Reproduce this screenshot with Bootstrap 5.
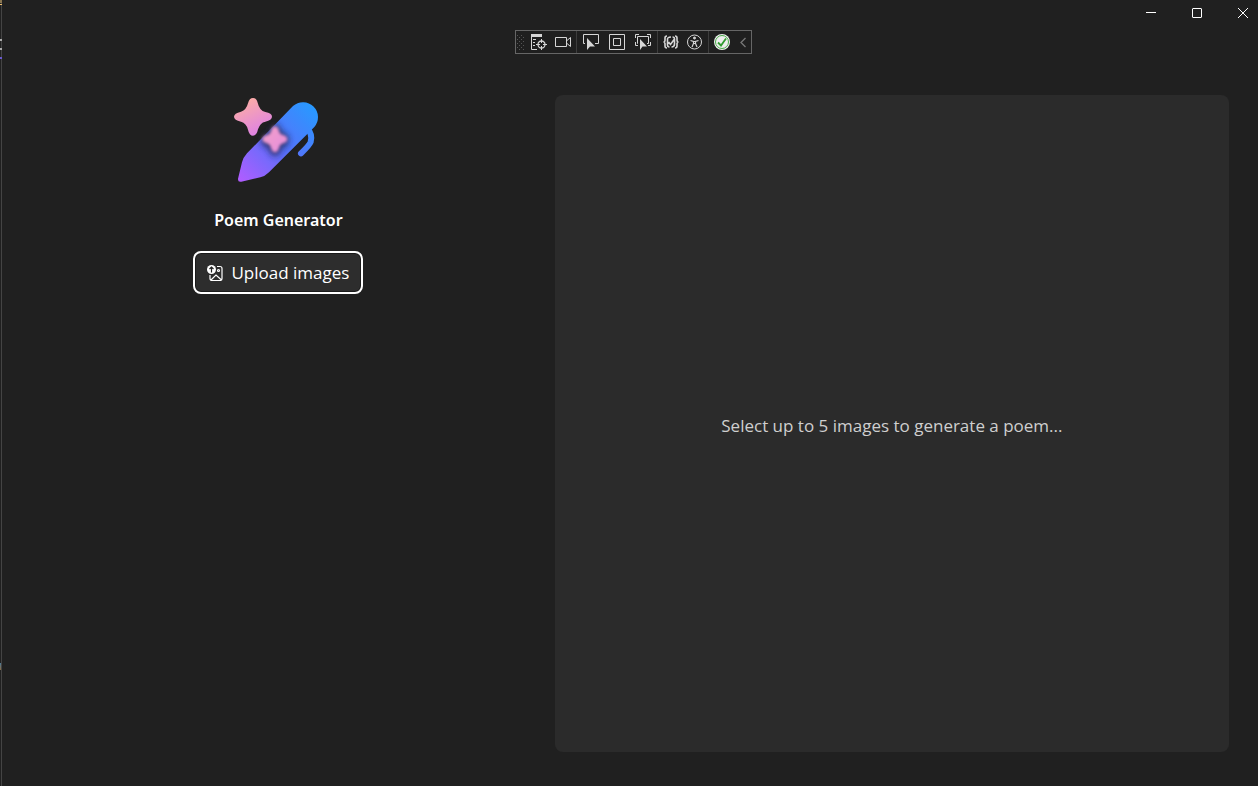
<!DOCTYPE html>
<html lang="en" data-bs-theme="dark">
<head>
<meta charset="utf-8">
<meta name="viewport" content="width=device-width, initial-scale=1">
<title>Poem Generator</title>
<link href="https://cdn.jsdelivr.net/npm/bootstrap@5.3.0/dist/css/bootstrap.min.css" rel="stylesheet">
<style>
  body { background: #202020; font-family: "Open Sans", "Noto Sans", sans-serif; font-size: 17px; line-height: 24px; color: #fff; }
  .edge { width: 2px; background:
    linear-gradient(#f0c070, #f0c070) 0 4px / 2px 1px no-repeat,
    linear-gradient(#8a7650, #8a7650) 0 0 / 2px 3px no-repeat,
    linear-gradient(#aaa, #aaa) 0 39px / 2px 2px no-repeat,
    linear-gradient(#aaa, #aaa) 0 48px / 2px 2px no-repeat,
    linear-gradient(#6a5acd, #6a5acd) 0 57px / 2px 2px no-repeat,
    linear-gradient(#4a7a9a, #8a6a40) 0 663px / 1px 7px no-repeat,
    linear-gradient(#444, #444) 1px 0 / 1px 100% no-repeat, #202020; }
  .caption-btn { width: 46px; height: 26px; padding: 0; border: 0; border-radius: 0; color: #fff; }
  .caption-bar { margin-right: -8px; }
  .tool-row { padding-left: 7px; padding-top: 4px; }
  .tools { border: 1px solid #666; background: #1f1f1f; height: 24px; }
  .tools .btn { width: 25px; height: 22px; padding: 0; border: 0; border-radius: 0; color: #d6d6d6; }
  .tools .wide { width: 27px; }
  .tools .mid { width: 26px; }
  .tools .slim { width: 16px; color: #777; }
  .grip { width: 10px; }
  .divider { width: 1px; background: #3d3d3d; }
  .work { display: grid; grid-template-columns: 82fr 100fr; padding: 41px 29px 34px 0; }
  .tool-side { padding-top: 3px; }
  .app-name { font-family: "Noto Sans", "Open Sans", sans-serif; font-size: 16px; font-weight: 600; line-height: 24px; margin: 26px 0 19px; }
  .upload { height: 43px; padding: 0 12px; background: #2d2d2d; border: 2px solid #fff; border-radius: 8px; box-shadow: inset 0 0 0 1px #1a1a1a; font-size: 17px; color: #fff; }
  .result { background: #2b2b2b; border-radius: 8px; color: #cfcfcf; padding-top: 4px; }
</style>
</head>
<body class="overflow-x-hidden">
<div class="d-flex min-vh-100">
  <div class="edge flex-shrink-0"></div>
  <div class="d-flex flex-column flex-grow-1 overflow-hidden">
    <header>
      <div class="caption-bar d-flex justify-content-end">
        <button type="button" class="btn caption-btn d-flex align-items-center justify-content-center" aria-label="Minimize"><svg width="12" height="12" fill="none" stroke="currentColor"><path d="M1 5.500h10"/></svg></button>
        <button type="button" class="btn caption-btn d-flex align-items-center justify-content-center" aria-label="Maximize"><svg width="12" height="12" fill="none" stroke="currentColor"><rect x="1.500" y="1.500" width="9" height="9" rx=".5"/></svg></button>
        <button type="button" class="btn caption-btn d-flex align-items-center justify-content-center" aria-label="Close"><svg width="12" height="12" fill="none" stroke="currentColor"><path d="M1 1l10 10M11 1L1 11"/></svg></button>
      </div>
      <div class="tool-row d-flex justify-content-center">
        <div class="tools d-flex" role="toolbar" aria-label="Debug tools">
          <svg class="grip" height="22" viewBox="0 0 10 22"><defs><pattern id="dots" width="4" height="4" patternUnits="userSpaceOnUse"><path fill="#555" d="M1 0h1v1H1zM3 2h1v1H3z"/></pattern></defs><rect x="1" y="3" width="7" height="17" fill="url(#dots)"/></svg>
          <button type="button" class="btn d-flex align-items-center justify-content-center" aria-label="Live visual tree"><svg width="16" height="16" fill="none" stroke="currentColor"><path fill="currentColor" stroke="none" d="M0 0h11v3H0z"/><path d="M.5 3v12.500H6M2 5.500h3M2 8.500h2M2 11.500h2"/><circle cx="10.500" cy="10.500" r="3.500" stroke-width="1.300"/><path d="M10.500 5v4M10.500 12v4M5 10.500h4M12 10.500h4"/></svg></button>
          <button type="button" class="btn d-flex align-items-center justify-content-center" aria-label="Record"><svg width="17" height="16" fill="none" stroke="currentColor"><path d="M.5 3.500h11v9H.5zM12 6.500l3.500-3v9l-3.500-3"/></svg></button>
          <span class="divider"></span>
          <button type="button" class="btn wide d-flex align-items-center justify-content-center" aria-label="Select element"><svg width="15" height="16" fill="none" stroke="currentColor" overflow="visible"><path d="M2 9.500H.5v-9h15v9H12"/><path fill="currentColor" stroke="none" d="M4 4v12l3-3.500h5z"/></svg></button>
          <button type="button" class="btn mid d-flex align-items-center justify-content-center" aria-label="Display layout adorners"><svg width="16" height="16" fill="none" stroke="currentColor"><path d="M.5.500h15v15H.5zM4.500 4.500h7v7h-7z"/></svg></button>
          <button type="button" class="btn wide d-flex align-items-center justify-content-center" aria-label="Track focused element"><svg width="17" height="16" fill="none" stroke="currentColor"><path d="M.5 4V.5H4M12 .5h3.500V4M15.500 8v3.500H13M.5 8v3.500H3M3 9.500h-.5v-7h11v7H12"/><path fill="currentColor" stroke="none" d="M5 5v11l2.500-3.500H12z"/></svg></button>
          <span class="divider"></span>
          <button type="button" class="btn d-flex align-items-center justify-content-center" aria-label="Binding failures"><svg width="16" height="16" fill="none" stroke="currentColor" stroke-width="1.600"><path d="M4 2Q2 2 2 4v2q0 2-1.500 2Q2 8 2 10v2q0 2 2 2M12 2q2 0 2 2v2q0 2 1.500 2Q14 8 14 10v2q0 2-2 2M8 3Q4 3 4.500 6v5q0 2 2 2M8.500 13q3 0 3-3V5q0-2-2-2M5.500 8l2 2.500L11.500 5"/></svg></button>
          <button type="button" class="btn d-flex align-items-center justify-content-center" aria-label="Accessibility"><svg width="17" height="16" fill="none" stroke="currentColor"><circle cx="7.500" cy="8" r="7"/><circle cx="7.500" cy="4" r="1" fill="currentColor"/><path stroke-width="1.200" d="M3.500 6.500L6.500 7.500v2L5 13M11.500 6.500L8.500 7.500v2L10 13M6.500 7.500h2M6.500 9.500h2"/></svg></button>
          <span class="divider"></span>
          <button type="button" class="btn mid d-flex align-items-center justify-content-center" aria-label="Hot Reload ready"><svg width="16" height="16" fill="none"><circle cx="8" cy="8" r="8" fill="#eee"/><circle cx="8" cy="8" r="6.500" stroke="#4aac4a"/><path d="M4 8.500l3 3 5-7" stroke="#2f9b2f" stroke-width="1.800"/></svg></button>
          <button type="button" class="btn slim d-flex align-items-center justify-content-center" aria-label="Collapse toolbar"><svg width="8" height="12" fill="none" stroke="currentColor" stroke-width="1.300"><path d="M6.500 2L2 6.500 6.500 11"/></svg></button>
        </div>
      </div>
    </header>
    <main class="work flex-grow-1">
      <section class="tool-side d-flex flex-column align-items-center">
        <svg width="88" height="84" viewBox="27 24 264 252" overflow="visible" aria-hidden="true">
          <defs>
            <linearGradient id="pen" gradientUnits="userSpaceOnUse" x1="40" y1="275" x2="265" y2="50"><stop offset="0" stop-color="#b35cff"/><stop offset=".5" stop-color="#5a70fa"/><stop offset="1" stop-color="#2899ff"/></linearGradient>
            <linearGradient id="star" x1=".2" y1="0" x2=".7" y2="1"><stop offset="0" stop-color="#ffb0a0"/><stop offset="1" stop-color="#dc7fe8"/></linearGradient>
            <linearGradient id="spark" x1="0" y1="0" x2="1" y2="1"><stop offset="0" stop-color="#f2a0c8"/><stop offset="1" stop-color="#e58ddd"/></linearGradient>
            <filter id="shade" x="-50%" y="-50%" width="200%" height="200%"><feGaussianBlur stdDeviation="9"/></filter>
            <filter id="soft" x="-30%" y="-30%" width="160%" height="160%"><feGaussianBlur stdDeviation="5"/></filter>
          </defs>
          <path fill="none" stroke="url(#pen)" stroke-width="18" stroke-linecap="round" d="M246 114Q264 134 257 156Q253 166 228 190"/>
          <path fill="url(#pen)" d="M66 190L204 48A45 45 0 0 1 268 111L132 247Q120 259 106 262L49 275Q38 277 39 266L51 217Q55 202 66 190Z"/>
          <path fill="#1c2148" opacity=".8" filter="url(#shade)" d="M150 102Q163 102 170 126Q192 132 192 150Q192 168 170 174Q163 198 150 198Q137 198 130 174Q108 168 108 150Q108 132 130 126Q137 102 150 102Z"/>
          <path fill="url(#spark)" filter="url(#soft)" d="M150 109Q159 109 163 125Q165 133 177 136Q187 140 187 148Q187 156 177 159Q165 162 163 172Q159 187 150 187Q141 187 137 172Q135 162 123 159Q112 156 112 148Q112 140 123 136Q135 133 137 125Q141 109 150 109Z"/>
          <path fill="url(#star)" d="M84 24Q94 24 98 38Q103 61 121 66Q141 70 141 80Q141 90 121 95Q105 98 99 118Q95 137 84 137Q73 137 69 119Q64 99 48 95Q27 90 27 80Q27 70 48 65Q64 60 69 40Q73 24 84 24Z"/>
        </svg>
        <h1 class="app-name">Poem Generator</h1>
        <button type="button" class="upload btn d-flex align-items-center gap-2">
          <svg width="16" height="16" fill="none" stroke="currentColor" stroke-width="1.200" aria-hidden="true"><path d="M10 1.500h3q2 0 2 2v10q0 2-2 2H5q-2 0-2-2V10M4 15l5-5 5.500 5"/><circle cx="11.500" cy="5.500" r="1"/><circle cx="4.500" cy="4.500" r="4.500" fill="#fff" stroke="none"/><path stroke="#222" d="M4.500 7.500V2M2.500 4l2-2 2 2"/></svg>
          <span>Upload images</span>
        </button>
      </section>
      <section class="result d-flex align-items-center justify-content-center">
        <span>Select up to 5 images to generate a poem...</span>
      </section>
    </main>
  </div>
</div>
<script src="https://cdn.jsdelivr.net/npm/bootstrap@5.3.0/dist/js/bootstrap.bundle.min.js"></script>
</body>
</html>
